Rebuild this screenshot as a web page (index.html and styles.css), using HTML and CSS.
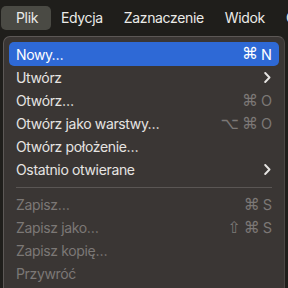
FILE: index.html
```html
<!DOCTYPE html>
<html lang="pl">
<head>
    <meta charset="UTF-8">
    <meta name="viewport" content="width=device-width, initial-scale=1.0">
    <title>Plik</title>
    <link rel="stylesheet" href="styles.css">
</head>
<body>
    <!-- Menu bar -->
    <div class="menubar">
        <span class="bar-item active">Plik</span>
        <span class="bar-item">Edycja</span>
        <span class="bar-item">Zaznaczenie</span>
        <span class="bar-item">Widok</span>
        <span class="bar-item">O</span>
    </div>

    <!-- File menu -->
    <div class="menu">
        <div class="row selected"><span>Nowy…</span><span class="keys"><i>⌘</i> N</span></div>
        <div class="row"><span>Utwórz</span><svg class="chev" width="7" height="11" viewBox="0 0 7 11"><path d="M1.2 1l4.3 4.5L1.2 10" fill="none" stroke="currentColor" stroke-width="1.9" stroke-linecap="round" stroke-linejoin="round"/></svg></div>
        <div class="row"><span>Otwórz…</span><span class="keys dim"><i>⌘</i> O</span></div>
        <div class="row"><span>Otwórz jako warstwy…</span><span class="keys dim"><i>⌥</i><i>⌘</i> O</span></div>
        <div class="row"><span>Otwórz położenie…</span></div>
        <div class="row"><span>Ostatnio otwierane</span><svg class="chev" width="7" height="11" viewBox="0 0 7 11"><path d="M1.2 1l4.3 4.5L1.2 10" fill="none" stroke="currentColor" stroke-width="1.9" stroke-linecap="round" stroke-linejoin="round"/></svg></div>
        <div class="sep"></div>
        <div class="row disabled"><span>Zapisz…</span><span class="keys"><i>⌘</i> S</span></div>
        <div class="row disabled"><span>Zapisz jako…</span><span class="keys"><i>⇧</i><i>⌘</i> S</span></div>
        <div class="row disabled"><span>Zapisz kopię…</span></div>
        <div class="row disabled"><span>Przywróć</span></div>
        <div class="sep"></div>
    </div>
</body>
</html>
```

FILE: styles.css
```css
body {
    margin: 0;
    background: #1f1e1b;
    font-family: 'Inter', 'Noto Sans', sans-serif;
    font-size: 14px;
    letter-spacing: -0.35px;
    color: #e6e4e2;
    overflow: hidden;
}

.menubar {
    display: flex;
    align-items: center;
    height: 35px;
    padding-left: 1px;
    white-space: nowrap;
    overflow: hidden;
}

.bar-item {
    padding: 0 11px 0 10px;
    line-height: 24px;
    color: #ebebe8;
}

.bar-item.active {
    padding: 0 13px 0 15px;
    background: #4a4a44;
    border-radius: 5px;
}

.menu {
    margin: 1px 0 0 3px;
    width: 280px;
    padding-top: 5px;
    background: #3a3634;
    border: 1px solid #5c5856;
    border-bottom: none;
    border-right-color: #4a4644;
    border-radius: 7px 7px 0 0;
}

.row {
    display: flex;
    justify-content: space-between;
    align-items: center;
    height: 23px;
    margin: 0 5px;
    padding: 0 7px;
    border-radius: 5px;
    white-space: nowrap;
}

.row.selected {
    height: 24px;
    background: #2e69d6;
    color: #fff;
}

.keys {
    display: flex;
    align-items: center;
    gap: 3px;
    font-size: 14.5px;
    letter-spacing: 0;
}

.keys i {
    font-style: normal;
    font-family: 'DejaVu Sans', sans-serif;
    font-size: 16px;
    line-height: 1;
}

.keys.dim,
.row.disabled {
    color: #7c7876;
}

.chev {
    margin-right: 1px;
    color: #e6e4e2;
}

.sep {
    height: 1px;
    margin: 6px 12px 5px 12px;
    background: #5a5654;
}
```
